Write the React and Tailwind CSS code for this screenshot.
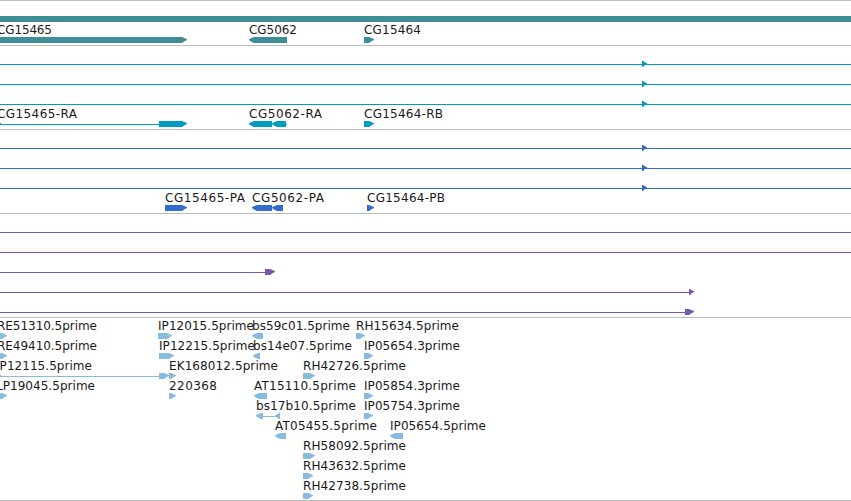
const TRACKS = [
  {
    id: 'gene',
    color: 'text-[#3e8e95]',
    padding: 'pt-px pb-[2px]',
    rows: [
      { shapes: [['box', 0, 851]] },
      {
        tall: true,
        labels: [['CG15465', -3, 55], ['CG5062', 249, 48], ['CG15464', 364, 57]],
        shapes: [['right', 0, 187], ['left', 249, 287], ['right', 364, 374]],
      },
    ],
  },
  {
    id: 'transcript',
    color: 'text-[#009dc1]',
    padding: 'pt-px pb-[2px]',
    rows: [
      { shapes: [['line', 0, 851], ['right', 642, 647]] },
      { shapes: [['line', 0, 851], ['right', 642, 647]] },
      { shapes: [['line', 0, 851], ['right', 642, 647]] },
      {
        labels: [['CG15465-RA', -3, 80], ['CG5062-RA', 249, 73], ['CG15464-RB', 364, 79]],
        shapes: [
          ['line', 0, 160], ['right', -4, 1], ['right', 159, 187], ['left', 249, 272],
          ['left', 272, 286], ['line', 284, 287], ['right', 364, 374],
        ],
      },
    ],
  },
  {
    id: 'protein',
    color: 'text-[#316dcd]',
    padding: 'pt-px pb-[2px]',
    rows: [
      { shapes: [['line', 0, 851], ['right', 642, 647]] },
      { shapes: [['line', 0, 851], ['right', 642, 647]] },
      { shapes: [['line', 0, 851], ['right', 642, 647]] },
      {
        labels: [['CG15465-PA', 165, 80], ['CG5062-PA', 252, 72], ['CG15464-PB', 367, 78]],
        shapes: [['right', 165, 187], ['left', 252, 272], ['left', 272, 283], ['right', 367, 374]],
      },
    ],
  },
  {
    id: 'cdna',
    color: 'text-[#7659aa]',
    padding: 'pt-px pb-[2px]',
    rows: [
      { shapes: [['line', 0, 851]] },
      { shapes: [['line', 0, 851]] },
      { shapes: [['line', 0, 266], ['right', 265, 275]] },
      { shapes: [['line', 0, 690], ['right', 689, 694]] },
      { shapes: [['line', 0, 686], ['right', 685, 694]] },
    ],
  },
  {
    id: 'est',
    color: 'text-[#87bcde]',
    padding: 'pt-px pb-px',
    rows: [
      {
        labels: [['RE51310.5prime', -3, 100], ['IP12015.5prime', 158, 96], ['bs59c01.5prime', 252, 98], ['RH15634.5prime', 356, 103]],
        shapes: [['right', -4, 7], ['right', 158, 172], ['left', 252, 263], ['right', 356, 365]],
      },
      {
        labels: [['RE49410.5prime', -3, 100], ['IP12215.5prime', 159, 96], ['bs14e07.5prime', 253, 99], ['IP05654.3prime', 364, 96]],
        shapes: [['right', -4, 7], ['right', 159, 174], ['left', 253, 260], ['right', 364, 373]],
      },
      {
        labels: [['IP12115.5prime', -4, 96], ['EK168012.5prime', 169, 109], ['RH42726.5prime', 303, 103]],
        shapes: [['right', -4, 1], ['line', 0, 160], ['right', 159, 169], ['right', 169, 176], ['right', 303, 315]],
      },
      {
        labels: [['LP19045.5prime', -4, 99], ['220368', 169, 48], ['AT15110.5prime', 254, 102], ['IP05854.3prime', 364, 96]],
        shapes: [['right', -4, 7], ['right', 169, 176], ['left', 254, 267], ['right', 364, 373]],
      },
      {
        labels: [['bs17b10.5prime', 256, 100], ['IP05754.3prime', 364, 96]],
        shapes: [['line', 260, 277], ['left', 256, 263], ['left', 275, 280], ['right', 364, 373]],
      },
      {
        labels: [['AT05455.5prime', 275, 102], ['IP05654.5prime', 390, 96]],
        shapes: [['left', 275, 286], ['left', 390, 403]],
      },
      { labels: [['RH58092.5prime', 303, 103]], shapes: [['right', 303, 315]] },
      { labels: [['RH43632.5prime', 303, 103]], shapes: [['right', 303, 313]] },
      { labels: [['RH42738.5prime', 303, 103]], shapes: [['right', 303, 313]] },
    ],
  },
];

const Shape = ({ type, start, end }) => {
  if (type === 'box') return <rect x={start} y="0" width={end - start} height="6" />;
  if (type === 'line') return <rect x={start} y="3" width={end - start} height="1" />;
  // short features are all arrow head, longer ones get a body first
  const head = end - start > 5 ? 5 : 4;
  if (type === 'right') {
    const neck = end - head;
    return <path d={`M${start} 0H${neck}L${end - 2} 1.3L${end} 2.2V3L${end - 2} 4L${neck} 6H${start}Z`} />;
  }
  const neck = start + head;
  return <path d={`M${end} 0H${neck}L${start + 2} 1.3L${start} 2.2V3L${start + 2} 4.4L${neck} 6H${end}Z`} />;
};

// One lane of features, glyphs sit on the bottom edge and labels above them
const Row = ({ row }) => (
  <div className={`flex items-end ${row.tall ? 'h-[21px]' : 'h-5'}`}>
    <svg width="851" height="20" className="block shrink-0 overflow-hidden" fill="currentColor">
      <g transform="translate(0 14)">
        {row.shapes.map(([type, start, end], i) => (
          <Shape key={i} type={type} start={start} end={end} />
        ))}
      </g>
      {row.labels?.map(([name, x, width]) => (
        <text key={name} x={x} y="11" textLength={width} className="fill-[#1a1a1a] font-['DejaVu_Sans',sans-serif] text-[12px]">
          {name}
        </text>
      ))}
    </svg>
  </div>
);

const Track = ({ track }) => (
  <section className={`border-t border-[#bebebe] ${track.padding} ${track.color}`}>
    {track.rows.map((row, i) => (
      <Row key={i} row={row} />
    ))}
  </section>
);

const App = () => (
  <main className="w-[851px] h-[501px] overflow-hidden bg-white border-b border-[#bebebe]">
    {TRACKS.map(track => (
      <Track key={track.id} track={track} />
    ))}
  </main>
);

export default App;
